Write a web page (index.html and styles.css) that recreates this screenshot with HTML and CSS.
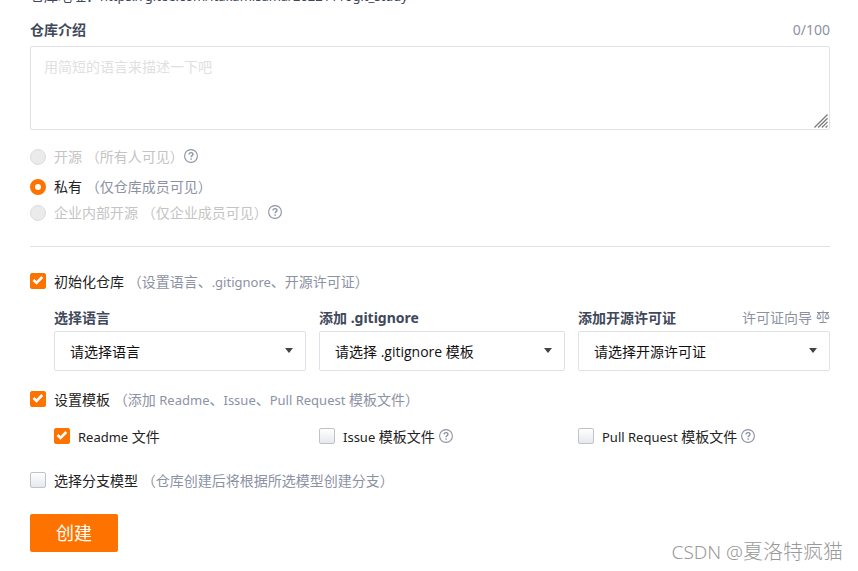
FILE: index.html
```html
<!DOCTYPE html>
<html lang="zh-CN">
<head>
<meta charset="utf-8">
<meta name="viewport" content="width=device-width, initial-scale=1">
<title>新建仓库</title>
<link rel="stylesheet" href="styles.css">
</head>
<body>
<svg class="sprite" aria-hidden="true">
  <symbol id="help" viewBox="0 0 14 14">
    <circle cx="7" cy="7" r="6.4" fill="none" stroke="currentColor" stroke-width="1.1"/>
    <path d="M5 5.5C5 4.3 5.8 3.6 7 3.6s2 .7 2 1.7c0 1.3-1.9 1.4-1.9 3" fill="none" stroke="currentColor" stroke-width="1.3"/>
    <circle cx="7.1" cy="10" r=".85" fill="currentColor"/>
  </symbol>
</svg>
<form class="repo-form">
  <p class="address">仓库地址：<span class="latin">https://gitee.com/itakamisama/20221110git_study</span></p>

  <div class="field-head">
    <label class="title" for="intro">仓库介绍</label>
    <span class="muted">0/100</span>
  </div>
  <div class="intro">
    <textarea id="intro" placeholder="用简短的语言来描述一下吧"></textarea>
    <svg class="grip" viewBox="0 0 15 15" aria-hidden="true"><path d="M.5 14.5l14-14M4.5 14.5l10-10M8.5 14.5l6-6M12.5 14.5l2-2" fill="none" stroke="#777" stroke-width="1.3"/></svg>
  </div>

  <div class="option disabled first">
    <input type="radio" name="visibility" id="open" disabled>
    <label for="open">开源 <span>（所有人可见）</span></label>
    <svg class="help"><use href="#help"/></svg>
  </div>
  <div class="option">
    <input type="radio" name="visibility" id="private" checked>
    <label for="private">私有 <span class="muted">（仅仓库成员可见）</span></label>
  </div>
  <div class="option disabled">
    <input type="radio" name="visibility" id="internal" disabled>
    <label for="internal">企业内部开源 <span>（仅企业成员可见）</span></label>
    <svg class="help"><use href="#help"/></svg>
  </div>

  <hr>

  <div class="option">
    <input type="checkbox" id="init" checked>
    <label for="init">初始化仓库 <span class="muted">（设置语言、<span class="latin">.gitignore</span>、开源许可证）</span></label>
  </div>
  <div class="columns selects">
    <div>
      <div class="field-head"><label class="title" for="lang">选择语言</label></div>
      <div class="select"><select id="lang"><option>请选择语言</option></select></div>
    </div>
    <div>
      <div class="field-head"><label class="title" for="ignore">添加 .gitignore</label></div>
      <div class="select"><select id="ignore"><option>请选择 .gitignore 模板</option></select></div>
    </div>
    <div>
      <div class="field-head">
        <label class="title" for="license">添加开源许可证</label>
        <a class="muted guide" href="#">许可证向导
          <svg class="scale" viewBox="0 0 14 14" aria-hidden="true"><path d="M1 2.5h12M7 .5v12M3.5 12.5h7M3 2.5L1 7.5M3 2.5L5 7.5M11 2.5L9 7.5M11 2.5L13 7.5" fill="none" stroke="currentColor"/><path d="M.4 7.5h5.2c-.4 2.4-4.8 2.4-5.2 0zM8.4 7.5h5.2c-.4 2.4-4.8 2.4-5.2 0z" fill="currentColor"/></svg>
        </a>
      </div>
      <div class="select"><select id="license"><option>请选择开源许可证</option></select></div>
    </div>
  </div>

  <div class="option">
    <input type="checkbox" id="templates" checked>
    <label for="templates">设置模板 <span class="muted">（添加 <span class="latin">Readme</span>、<span class="latin">Issue</span>、<span class="latin">Pull Request</span> 模板文件）</span></label>
  </div>
  <div class="columns files">
    <div class="option">
      <input type="checkbox" id="readme" checked>
      <label for="readme"><span class="latin">Readme</span> 文件</label>
    </div>
    <div class="option">
      <input type="checkbox" id="issue">
      <label for="issue"><span class="latin">Issue</span> 模板文件</label>
      <svg class="help near"><use href="#help"/></svg>
    </div>
    <div class="option">
      <input type="checkbox" id="pr">
      <label for="pr"><span class="latin">Pull Request</span> 模板文件</label>
      <svg class="help near"><use href="#help"/></svg>
    </div>
  </div>

  <div class="option">
    <input type="checkbox" id="branch">
    <label for="branch">选择分支模型 <span class="muted">（仓库创建后将根据所选模型创建分支）</span></label>
  </div>

  <button class="create" type="button">创建</button>
</form>
<div class="watermark"><span>CSDN @</span>夏洛特疯猫</div>
</body>
</html>
```
FILE: styles.css
```css
* { box-sizing: border-box; }

body {
  margin: 0;
  background: #fff;
  color: #222;
  font: 14px/20px "Noto Sans", "Noto Sans CJK SC", sans-serif;
  overflow: hidden;
}

input, textarea, select, button { font: inherit; margin: 0; }

.sprite { display: none; }

.latin { font-size: 13px; line-height: 1; }

.repo-form { padding: 0 28px 0 30px; }

.address { margin: -14px 0 14px; color: #40485b; }

.field-head {
  display: flex;
  justify-content: space-between;
}
.title { font-weight: 700; color: #40485b; }
.muted { color: #8c92a4; }

.intro { position: relative; margin-top: 6px; }
.intro textarea {
  display: block;
  width: 100%;
  height: 84px;
  padding: 10px 13px;
  border: 1px solid #e0e0e8;
  border-radius: 2px;
  resize: none;
  outline: 0;
  color: #222;
}
.intro textarea::placeholder { color: #e0e0e0; opacity: 1; }
.grip { position: absolute; right: 2px; bottom: 2px; width: 14px; height: 14px; }

.option {
  display: flex;
  align-items: center;
  height: 26px;
}
.option.first { margin: 14px 0 4px; }
.option.disabled label { color: #c4c4c4; }
.option input {
  appearance: none;
  flex: none;
  width: 16px;
  height: 16px;
  margin-right: 8px;
  border: 1px solid #bfc2c8;
  border-radius: 2px;
  background: linear-gradient(#fff, #e6e8ee);
}
.option input[type="checkbox"] { margin-bottom: 2px; }
.option input[type="radio"] {
  border-radius: 50%;
  border-color: #dcdcdc;
  background: #ebebeb;
}
.option input[type="radio"]:checked {
  border: 5px solid #fe7300;
  background: #fff;
}
.option input[type="checkbox"]:checked {
  border-color: #fe7300;
  background: #fe7300 url("data:image/svg+xml,%3Csvg xmlns='http://www.w3.org/2000/svg' viewBox='0 0 14 14'%3E%3Cpath d='M2.5 6l3 3 5.8-6' fill='none' stroke='white' stroke-width='2.6'/%3E%3C/svg%3E");
}

.help { width: 14px; height: 14px; margin-bottom: 2px; color: #8c92a4; }
.help.near { margin-left: 4px; }

hr {
  height: 1px;
  margin: 20px 0 22px;
  border: 0;
  background: #dce2e8;
}

.columns {
  display: grid;
  grid-template-columns: 252fr 246fr 252fr;
  column-gap: 13px;
  padding-left: 24px;
}
.selects { margin: 13px 0 16px; }
.files { margin: 11px 0 18px; }

.select { position: relative; margin-top: 3px; }
.select select {
  appearance: none;
  display: block;
  width: 100%;
  height: 40px;
  padding: 2px 32px 0 15px;
  border: 1px solid #e0e0e8;
  border-radius: 2px;
  background: #fff;
  color: #111;
  font-family: "Open Sans", "Noto Sans CJK SC", sans-serif;
}
.select::after {
  content: "";
  position: absolute;
  right: 13px;
  top: 17px;
  border: 4px solid transparent;
  border-top: 5px solid #444;
  border-bottom: 0;
}

.guide { display: flex; align-items: center; gap: 4px; text-decoration: none; }
.scale { width: 14px; height: 14px; margin-bottom: 2px; }

.create {
  display: block;
  width: 88px;
  height: 38px;
  margin-top: 20px;
  border: 0;
  border-radius: 2px;
  background: #fe7300;
  color: #fff;
  font-size: 18px;
}

.watermark {
  position: absolute;
  right: 15px;
  bottom: 6px;
  color: #999;
  font-size: 20px;
  line-height: 26px;
  font-weight: 300;
}
.watermark span { font-size: 19px; }
```
